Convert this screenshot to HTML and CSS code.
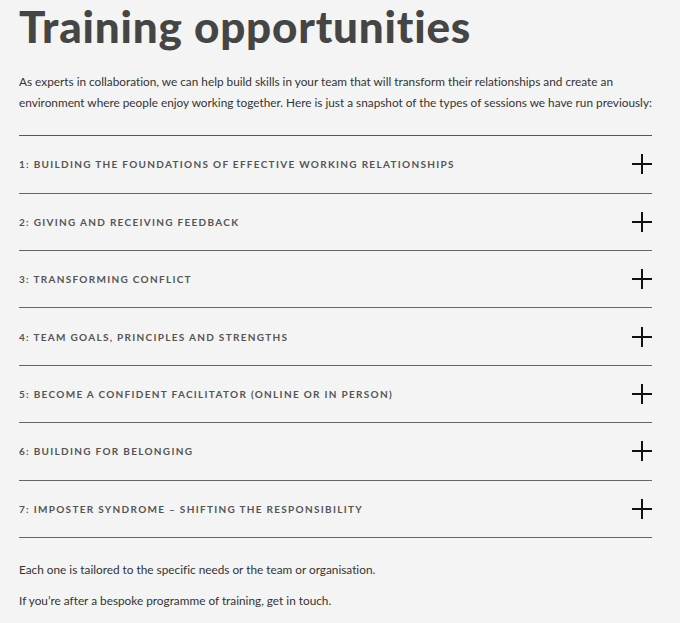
FILE: index.html
```html
<!DOCTYPE html>
<html lang="en">
<head>
<meta charset="utf-8">
<title>Training opportunities</title>
<link rel="stylesheet" href="styles.css">
</head>
<body>
<main class="page">
  <h1 class="title">Training opportunities</h1>
  <p class="intro">As experts in collaboration, we can help build skills in your team that will transform their relationships and create an environment where people enjoy working together. Here is just a snapshot of the types of sessions we have run previously:</p>

  <ul class="accordion">
    <li class="item"><span class="label">1: Building the foundations of effective working relationships</span><span class="plus"></span></li>
    <li class="item"><span class="label">2: Giving and receiving feedback</span><span class="plus"></span></li>
    <li class="item"><span class="label">3: Transforming conflict</span><span class="plus"></span></li>
    <li class="item"><span class="label">4: Team goals, principles and strengths</span><span class="plus"></span></li>
    <li class="item"><span class="label">5: Become a confident facilitator (online or in person)</span><span class="plus"></span></li>
    <li class="item"><span class="label">6: Building for belonging</span><span class="plus"></span></li>
    <li class="item"><span class="label">7: Imposter syndrome – shifting the responsibility</span><span class="plus"></span></li>
  </ul>

  <p class="note">Each one is tailored to the specific needs or the team or organisation.</p>
  <p class="note">If you’re after a bespoke programme of training, get in touch.</p>
</main>
</body>
</html>
```
FILE: styles.css
```css
html, body {
  margin: 0;
  padding: 0;
  background: #f4f4f4;
}

.page {
  width: 633px;
  padding: 0 0 0 19px;
  font-family: "Lato", "Liberation Sans", sans-serif;
  font-variant-ligatures: none;
  color: #333;
}

.title {
  margin: 0;
  font-size: 44px;
  line-height: normal;
  font-weight: 900;
  color: #454545;
  letter-spacing: 0.8px;
}

.intro {
  margin: 18.7px 0 22.5px;
  font-size: 11.8px;
  line-height: 21px;
  color: #333;
}

.accordion {
  list-style: none;
  margin: 0;
  padding: 0;
  border-top: 1px solid #555;
}

.item {
  display: flex;
  align-items: center;
  justify-content: space-between;
  height: 56.4px;
  border-bottom: 1px solid #666;
}

.label {
  font-size: 10px;
  font-weight: 700;
  letter-spacing: 1.3px;
  text-transform: uppercase;
  color: #555;
}

/* plus icon drawn from two bars */
.plus {
  position: relative;
  width: 20px;
  height: 20px;
  flex: none;
}

.plus::before,
.plus::after {
  content: "";
  position: absolute;
  background: #111;
}

.plus::before {
  left: 0;
  top: 9px;
  width: 20px;
  height: 2px;
}

.plus::after {
  left: 9px;
  top: 0;
  width: 2px;
  height: 20px;
}

.note {
  margin: 21.5px 0 0;
  font-size: 11.8px;
  line-height: 21px;
  color: #333;
}

.note + .note {
  margin-top: 10px;
}
```
